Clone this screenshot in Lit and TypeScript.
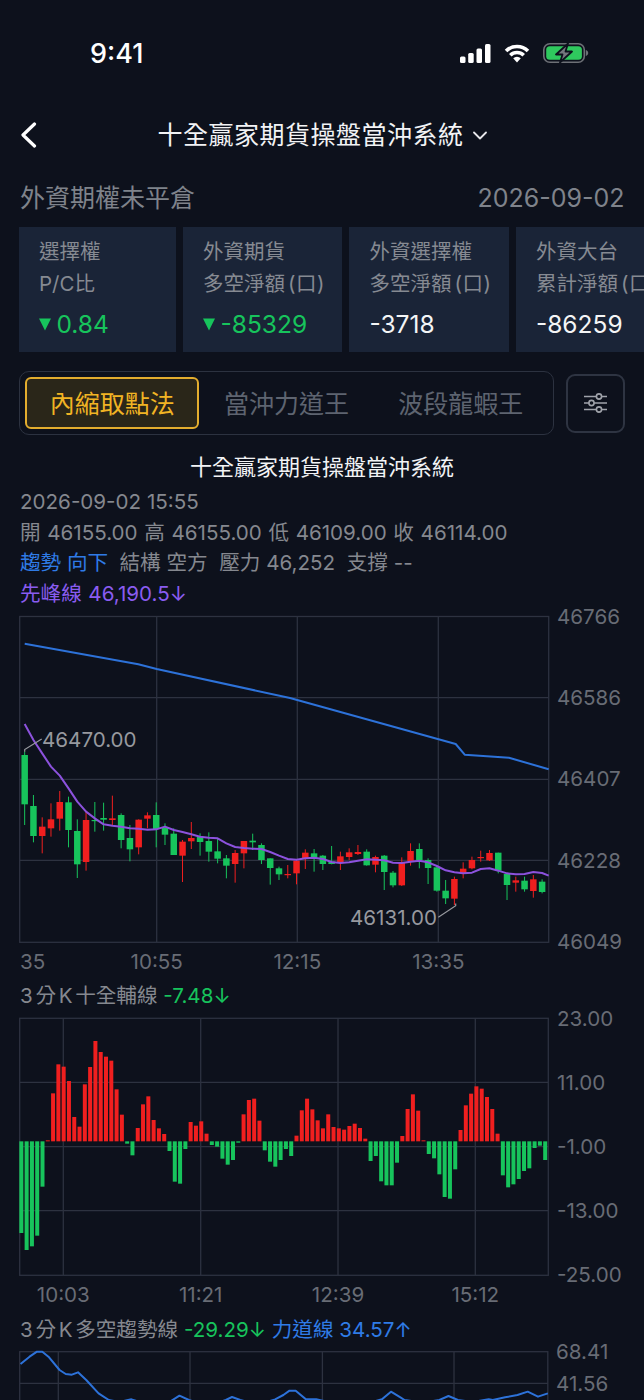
import { LitElement, html, css, svg } from "lit";
import { customElement } from "lit/decorators.js";

// [wickTop, bodyTop, bodyBottom, wickBottom, isRed] in 3x offsets from y=610
const C: [number, number, number, number, number][] = [
  [425,435,583,645,0],[555,588,678,697,0],[622,650,678,730,1],[580,628,655,680,1],[543,576,626,662,1],
  [560,577,660,712,0],[628,663,763,804,0],[603,630,756,782,1],[576,630,633,665,0],[578,624,629,662,0],
  [557,625,630,645,1],[610,615,690,715,0],[645,684,718,754,0],[628,629,712,733,1],[607,616,626,655,1],
  [577,615,657,712,0],[640,652,674,705,0],[655,671,735,735,0],[690,695,737,816,1],[636,684,694,717,1],
  [670,680,696,737,0],[667,693,725,755,0],[685,724,746,760,0],[735,745,767,805,0],[720,729,762,818,1],
  [693,693,730,775,1],[671,692,697,720,0],[700,705,750,762,0],[745,745,774,824,0],[770,775,793,810,0],
  [765,792,795,805,1],[750,752,790,823,1],[718,728,746,777,1],[717,730,742,785,0],[735,737,762,780,0],
  [708,755,762,763,0],[725,739,757,780,1],[715,727,741,750,1],[705,726,732,735,1],[718,725,766,767,0],
  [737,741,764,787,1],[735,737,786,840,0],[783,788,826,832,0],[742,757,826,828,1],[700,723,753,767,1],
  [700,717,750,775,0],[745,750,774,822,0],[770,772,842,845,0],[810,842,865,882,0],[800,807,866,885,1],
  [757,776,790,805,1],[740,750,775,778,1],[722,741,743,755,1],[720,729,751,753,1],[728,728,782,790,0],
  [790,792,825,870,0],[800,811,818,845,1],[800,812,838,845,0],[795,808,843,863,1],[808,815,846,850,0],
];
const PURPLE = [342,390,430,470,497,535,575,605,625,643,647,650,655,656,659,658,650,660,666,673,680,683,685,700,711,714,716,717,726,737,747,749,
  745,743,747,756,759,757,752,748,749,751,758,759,755,752,757,768,781,787,790,788,777,775,782,790,793,792,786,789];
// bar end y in 3x offsets from y=980, baseline 484
const B = [759,810,799,767,620,481,340,253,260,303,411,440,313,261,183,216,230,242,328,404,491,526,444,373,349,420,445,462,513,605,611,507,426,437,424,461,495,500,536,554,540,488,403,360,356,422,511,545,560,540,507,528,467,391,356,388,421,
  445,403,441,445,449,438,431,444,476,543,528,604,616,616,548,468,387,343,392,481,522,535,583,651,656,568,450,376,341,319,326,351,387,461,586,622,613,597,573,565,504,497,540,604];
const L3: [number, number][] = [[50,192],[72,170],[90,155],[103,155],[118,170],[145,210],[160,222],[175,224],[190,217],[210,240],[240,280],[265,300],[290,306],[320,298],[345,308],[410,308],[437,287],[460,300],[480,308],[530,308],[550,300],[565,291],[585,300],[610,308],[650,306],[670,298],[690,285],[705,272],[720,272],[745,298],[770,298],[800,306],[900,308],[930,298],[952,275],[975,292],[985,300],[1030,308],[1070,300],[1092,288],[1115,300],[1150,306],[1190,298],[1200,300],[1230,292],[1260,285],[1285,275],[1310,290],[1334,280]];

const RED = "#f01f1f";
const GREEN = "#17c45c";
const cx = (i: number) => 24.67 + 8.77 * i;
const y1 = (z: number) => 610 + z / 3;
const y2 = (z: number) => 980 + z / 3;

const purplePts = PURPLE.map((z, i) => i === PURPLE.length - 1 ? `${cx(i)},${y1(z)} 548.7,${y1(797)}` : `${cx(i)},${y1(z)}`).join(" ");
const bluePts = "24.7,643.7 138.3,664.3 156.7,669 290,698 455.7,744 464.7,754.7 509,757.7 548.7,769.3";
const l3Pts = L3.map(([x, y]) => `${x / 2.435},${1300 + y / 3}`).join(" ");

@customElement("app-root")
export class AppRoot extends LitElement {
  static styles = css`
    :host {
      display: block;
      width: 644px;
      height: 1400px;
      overflow: hidden;
      background: #0d111c;
      color: #8d9097;
      font-family: Inter, "Noto Sans CJK TC", sans-serif;
    }
    svg { display: block; }
    .status {
      height: 106px;
      display: flex;
      align-items: center;
      padding: 0 55px 0 90px;
      gap: 13px;
    }
    .time { flex: 1; color: #fff; font-size: 27px; font-weight: 500; }
    .nav {
      height: 58px;
      display: grid;
      grid-template-columns: 1fr auto 1fr;
      align-items: center;
      padding: 0 20px;
    }
    .nav-title {
      display: flex;
      align-items: center;
      gap: 9px;
      color: #f2f3f5;
      font-size: 25px;
      letter-spacing: 0.5px;
      white-space: nowrap;
    }
    .nav-title span { padding-bottom: 4px; }
    .heading {
      height: 63px;
      box-sizing: border-box;
      padding: 20px 19.5px 0 20px;
      display: flex;
      justify-content: space-between;
      font-size: 25px;
      line-height: 28px;
      color: #7f838b;
    }
    .cards {
      height: 125px;
      display: flex;
      gap: 7px;
      padding-left: 19px;
      overflow: hidden;
    }
    .card {
      flex: none;
      box-sizing: border-box;
      min-width: 157px;
      height: 125px;
      background: #1a2437;
      padding: 9px 17.5px 0 20px;
      font-size: 20.5px;
      line-height: 32px;
      color: #868a92;
      white-space: nowrap;
    }
    .par { margin-left: 3px; letter-spacing: 0.5px; }
    .card-value {
      margin-top: 7px;
      line-height: 34px;
      font-size: 24.5px;
      color: #f4f5f6;
      display: flex;
      align-items: center;
      gap: 5.5px;
    }
    .card-value.down { color: #17c45c; }
    .tabrow {
      margin-top: 19px;
      height: 64px;
      display: flex;
      align-items: center;
      gap: 12px;
      padding-left: 19px;
    }
    .tabs {
      box-sizing: border-box;
      width: 535px;
      height: 64px;
      display: flex;
      align-items: center;
      padding: 0 5px;
      border: 1px solid #2c3240;
      border-radius: 10px;
    }
    .tab {
      flex: 1;
      box-sizing: border-box;
      height: 52px;
      line-height: 50px;
      text-align: center;
      font-size: 25px;
      color: #5e6470;
      border-radius: 6px;
      border: 2px solid transparent;
    }
    .tab.active {
      color: #f1b424;
      background: #2a2619;
      border-color: #e3ad2e;
    }
    .settings {
      box-sizing: border-box;
      width: 59px;
      height: 59px;
      border: 2px solid #2e3442;
      border-radius: 9px;
      display: flex;
      align-items: center;
      justify-content: center;
    }
    .chart-title {
      margin-top: 17px;
      text-align: center;
      font-size: 22px;
      line-height: 30px;
      color: #f2f3f5;
    }
    .info { margin-top: 5px; }
    .sec { font-size: 20.6px; line-height: 30px; padding-left: 20px; color: #85888f; white-space: nowrap; }
    .sec.tight { line-height: 29px; }
    .info .sec { line-height: 30.5px; }
    .sec.ohlc { word-spacing: 0.85px; }
    .sec.purple { color: #8a5cf0; word-spacing: 0.8px; }
    .unit { letter-spacing: 0.4px; }
    .blue { color: #2f7be6; }
    .green { color: #17c45c; }
    .gap { margin-right: 5.5px; }
    .grid { stroke: #2d3240; stroke-width: 1.3; fill: none; }
    .ax { font-size: 20.6px; fill: #686c75; }
    .ann { font-size: 20.6px; fill: #97999f; }
    .lead { stroke: #97999f; stroke-width: 1.2; fill: none; }
    .line-blue { stroke: #2d72d9; stroke-width: 2; fill: none; stroke-linejoin: round; }
    .line-purple { stroke: #8c52dd; stroke-width: 2; fill: none; stroke-linejoin: round; }
  `;

  private frame(l: number, t: number, r: number, b: number, hs: number[], vs: number[]) {
    return svg`
      <rect class="grid" x=${l} y=${t} width=${r - l} height=${b - t}></rect>
      ${hs.map((y) => svg`<line class="grid" x1=${l} x2=${r} y1=${y} y2=${y}></line>`)}
      ${vs.map((x) => svg`<line class="grid" x1=${x} x2=${x} y1=${t} y2=${b}></line>`)}
    `;
  }

  private labels(items: [string, number][]) {
    return items.map(([t, y]) => svg`<text class="ax" x="557" y=${y + 7}>${t}</text>`);
  }

  private xlabels(items: [string, number][], y: number) {
    return items.map(([t, x]) => svg`<text class="ax" x=${x} y=${y + 7.5} text-anchor="middle">${t}</text>`);
  }

  private tri() {
    return html`<svg width="12" height="13" viewBox="0 0 12 13"><path d="M0 .5H12L6 12.5Z" fill=${GREEN}></path></svg>`;
  }

  render() {
    return html`
      <div class="status">
        <div class="time">9:41</div>
        <svg width="31" height="19" viewBox="0 0 31 19" fill="#fff">
          <rect x="0" y="12.5" width="5.5" height="6.5" rx="1.5"></rect>
          <rect x="8.2" y="9" width="5.5" height="10" rx="1.5"></rect>
          <rect x="16.5" y="4.5" width="5.5" height="14.5" rx="1.5"></rect>
          <rect x="25" y="0" width="5.5" height="19" rx="1.5"></rect>
        </svg>
        <svg width="26" height="19" viewBox="0 0 26 19">
          <path d="M2.04 7.04A15.5 15.5 0 0 1 23.96 7.04M6.28 11.28A9.5 9.5 0 0 1 19.72 11.28" fill="none" stroke="#fff" stroke-width="3.6"></path>
          <path d="M13 18.5L9.2 14.2A5.4 5.4 0 0 1 16.8 14.2Z" fill="#fff"></path>
        </svg>
        <svg width="46" height="20" viewBox="0 0 46 20">
          <rect x="0.8" y="0.8" width="40.5" height="18.4" rx="6" fill="none" stroke="#6d7076" stroke-width="1.6"></rect>
          <rect x="3.2" y="3.2" width="35.7" height="13.6" rx="3.6" fill="#2fc95e"></rect>
          <path d="M42.8 7v6c1.6-.5 2.4-1.7 2.4-3s-.8-2.5-2.4-3Z" fill="#6d7076"></path>
          <path d="M25 0.5L13 11.5H19.5L17 19.5L29 8.5H22.5Z" fill="#74777d" stroke="#0d111c" stroke-width="1.8" stroke-linejoin="round"></path>
        </svg>
      </div>

      <div class="nav">
        <svg width="18" height="26" viewBox="0 0 18 26">
          <path d="M14.5 2L3 13L14.5 24" fill="none" stroke="#fff" stroke-width="3.2" stroke-linecap="round" stroke-linejoin="round"></path>
        </svg>
        <div class="nav-title">
          <span>十全贏家期貨操盤當沖系統</span>
          <svg width="14" height="9" viewBox="0 0 14 9">
            <path d="M1 1.5L7 7.5L13 1.5" fill="none" stroke="#e6e7ea" stroke-width="1.8" stroke-linecap="round" stroke-linejoin="round"></path>
          </svg>
        </div>
        <span></span>
      </div>

      <div class="heading"><span>外資期權未平倉</span><span>2026-09-02</span></div>

      <div class="cards">
        <div class="card">
          <div>選擇權</div><div>P/C比</div>
          <div class="card-value down">${this.tri()}<span>0.84</span></div>
        </div>
        <div class="card">
          <div>外資期貨</div><div>多空淨額<span class="par">(口)</span></div>
          <div class="card-value down">${this.tri()}<span>-85329</span></div>
        </div>
        <div class="card">
          <div>外資選擇權</div><div>多空淨額<span class="par">(口)</span></div>
          <div class="card-value">-3718</div>
        </div>
        <div class="card">
          <div>外資大台</div><div>累計淨額<span class="par">(口)</span></div>
          <div class="card-value">-86259</div>
        </div>
      </div>

      <div class="tabrow">
        <div class="tabs">
          <div class="tab active">內縮取點法</div>
          <div class="tab">當沖力道王</div>
          <div class="tab">波段龍蝦王</div>
        </div>
        <div class="settings">
          <svg width="25" height="20" viewBox="0 0 25 20" fill="none" stroke="#a0a3aa" stroke-width="1.6">
            <path d="M1 3.5H24M1 10H24M1 16.5H24"></path>
            <circle cx="16" cy="3.5" r="2.6" fill="#0d111c"></circle>
            <circle cx="8.5" cy="10" r="2.6" fill="#0d111c"></circle>
            <circle cx="16" cy="16.5" r="2.6" fill="#0d111c"></circle>
          </svg>
        </div>
      </div>

      <div class="chart-title">十全贏家期貨操盤當沖系統</div>
      <div class="info">
        <div class="sec">2026-09-02 15:55</div>
        <div class="sec ohlc">開 46155.00 高 46155.00 低 46109.00 收 46114.00</div>
        <div class="sec"><span class="blue gap">趨勢 向下</span> 結構 空方&nbsp; 壓力 46,252&nbsp; 支撐 --</div>
        <div class="sec purple">先峰線 46,190.5↓</div>
      </div>

      <svg width="644" height="372" viewBox="0 609 644 372">
        ${this.frame(19.7, 616.5, 548.7, 942.3, [697.7, 779.3, 860.3], [156.7, 297.3, 438.3])}
        <polyline class="line-blue" points=${bluePts}></polyline>
        ${C.map(([wt, bt, bb, wb, red], i) => {
          const x = cx(i);
          const c = red ? RED : GREEN;
          return svg`
            <line x1=${x} x2=${x} y1=${y1(wt)} y2=${y1(wb)} stroke=${c} stroke-width="1"></line>
            <rect x=${x - 3.25} y=${y1(bt)} width="6.5" height=${Math.max((bb - bt) / 3, 1.2)} fill=${c}></rect>`;
        })}
        <polyline class="line-purple" points=${purplePts}></polyline>
        <polyline class="lead" points="24.7,751.7 24.7,749.5 41.7,739"></polyline>
        <text class="ann" x="42" y="746.5">46470.00</text>
        <polyline class="lead" points="438.3,917.3 455.7,905.7 455.7,903.5"></polyline>
        <text class="ann" x="350" y="924.5">46131.00</text>
        ${this.labels([["46766", 617], ["46586", 698], ["46407", 779], ["46228", 861], ["46049", 942]])}
        <text class="ax" x="20" y="968.5">35</text>
        ${this.xlabels([["10:55", 156.7], ["12:15", 297.3], ["13:35", 438.3]], 961)}
      </svg>

      <div class="sec"><span class="unit">3&#8202;分&#8202;K&#8202;</span>十全輔線 <span class="green">-7.48↓</span></div>

      <svg width="644" height="304" viewBox="0 1011 644 304">
        ${this.frame(19.7, 1018.3, 548.3, 1275.3, [1082.3, 1146.7, 1210.7], [63.3, 200.7, 338, 475.3])}
        ${B.map((z, i) => {
          const x = 64 / 3 + 5.2915 * i;
          const top = Math.min(z, 484);
          const h = Math.abs(z - 484) / 3;
          const left = x - 2;
          const w = Math.min(4, 548.3 - left);
          return svg`<rect x=${left} y=${y2(top)} width=${w} height=${h} fill=${z < 484 ? RED : GREEN}></rect>`;
        })}
        ${this.labels([["23.00", 1019], ["11.00", 1083], ["-1.00", 1147], ["-13.00", 1211], ["-25.00", 1275]])}
        ${this.xlabels([["10:03", 63.3], ["11:21", 200.7], ["12:39", 338], ["15:12", 475.3]], 1294)}
      </svg>

      <div class="sec tight"><span class="unit">3&#8202;分&#8202;K&#8202;</span>多空趨勢線 <span class="green">-29.29↓</span> <span class="blue">力道線 34.57↑</span></div>

      <svg width="644" height="56" viewBox="0 1344 644 56">
        ${this.frame(19.7, 1351.7, 547.8, 1440, [1383.3], [58.3, 190, 322.4, 454])}
        <polyline class="line-blue" points=${l3Pts}></polyline>
        <text class="ax" x="556" y="1359">68.41</text>
        <text class="ax" x="556" y="1391">41.56</text>
      </svg>
    `;
  }
}
